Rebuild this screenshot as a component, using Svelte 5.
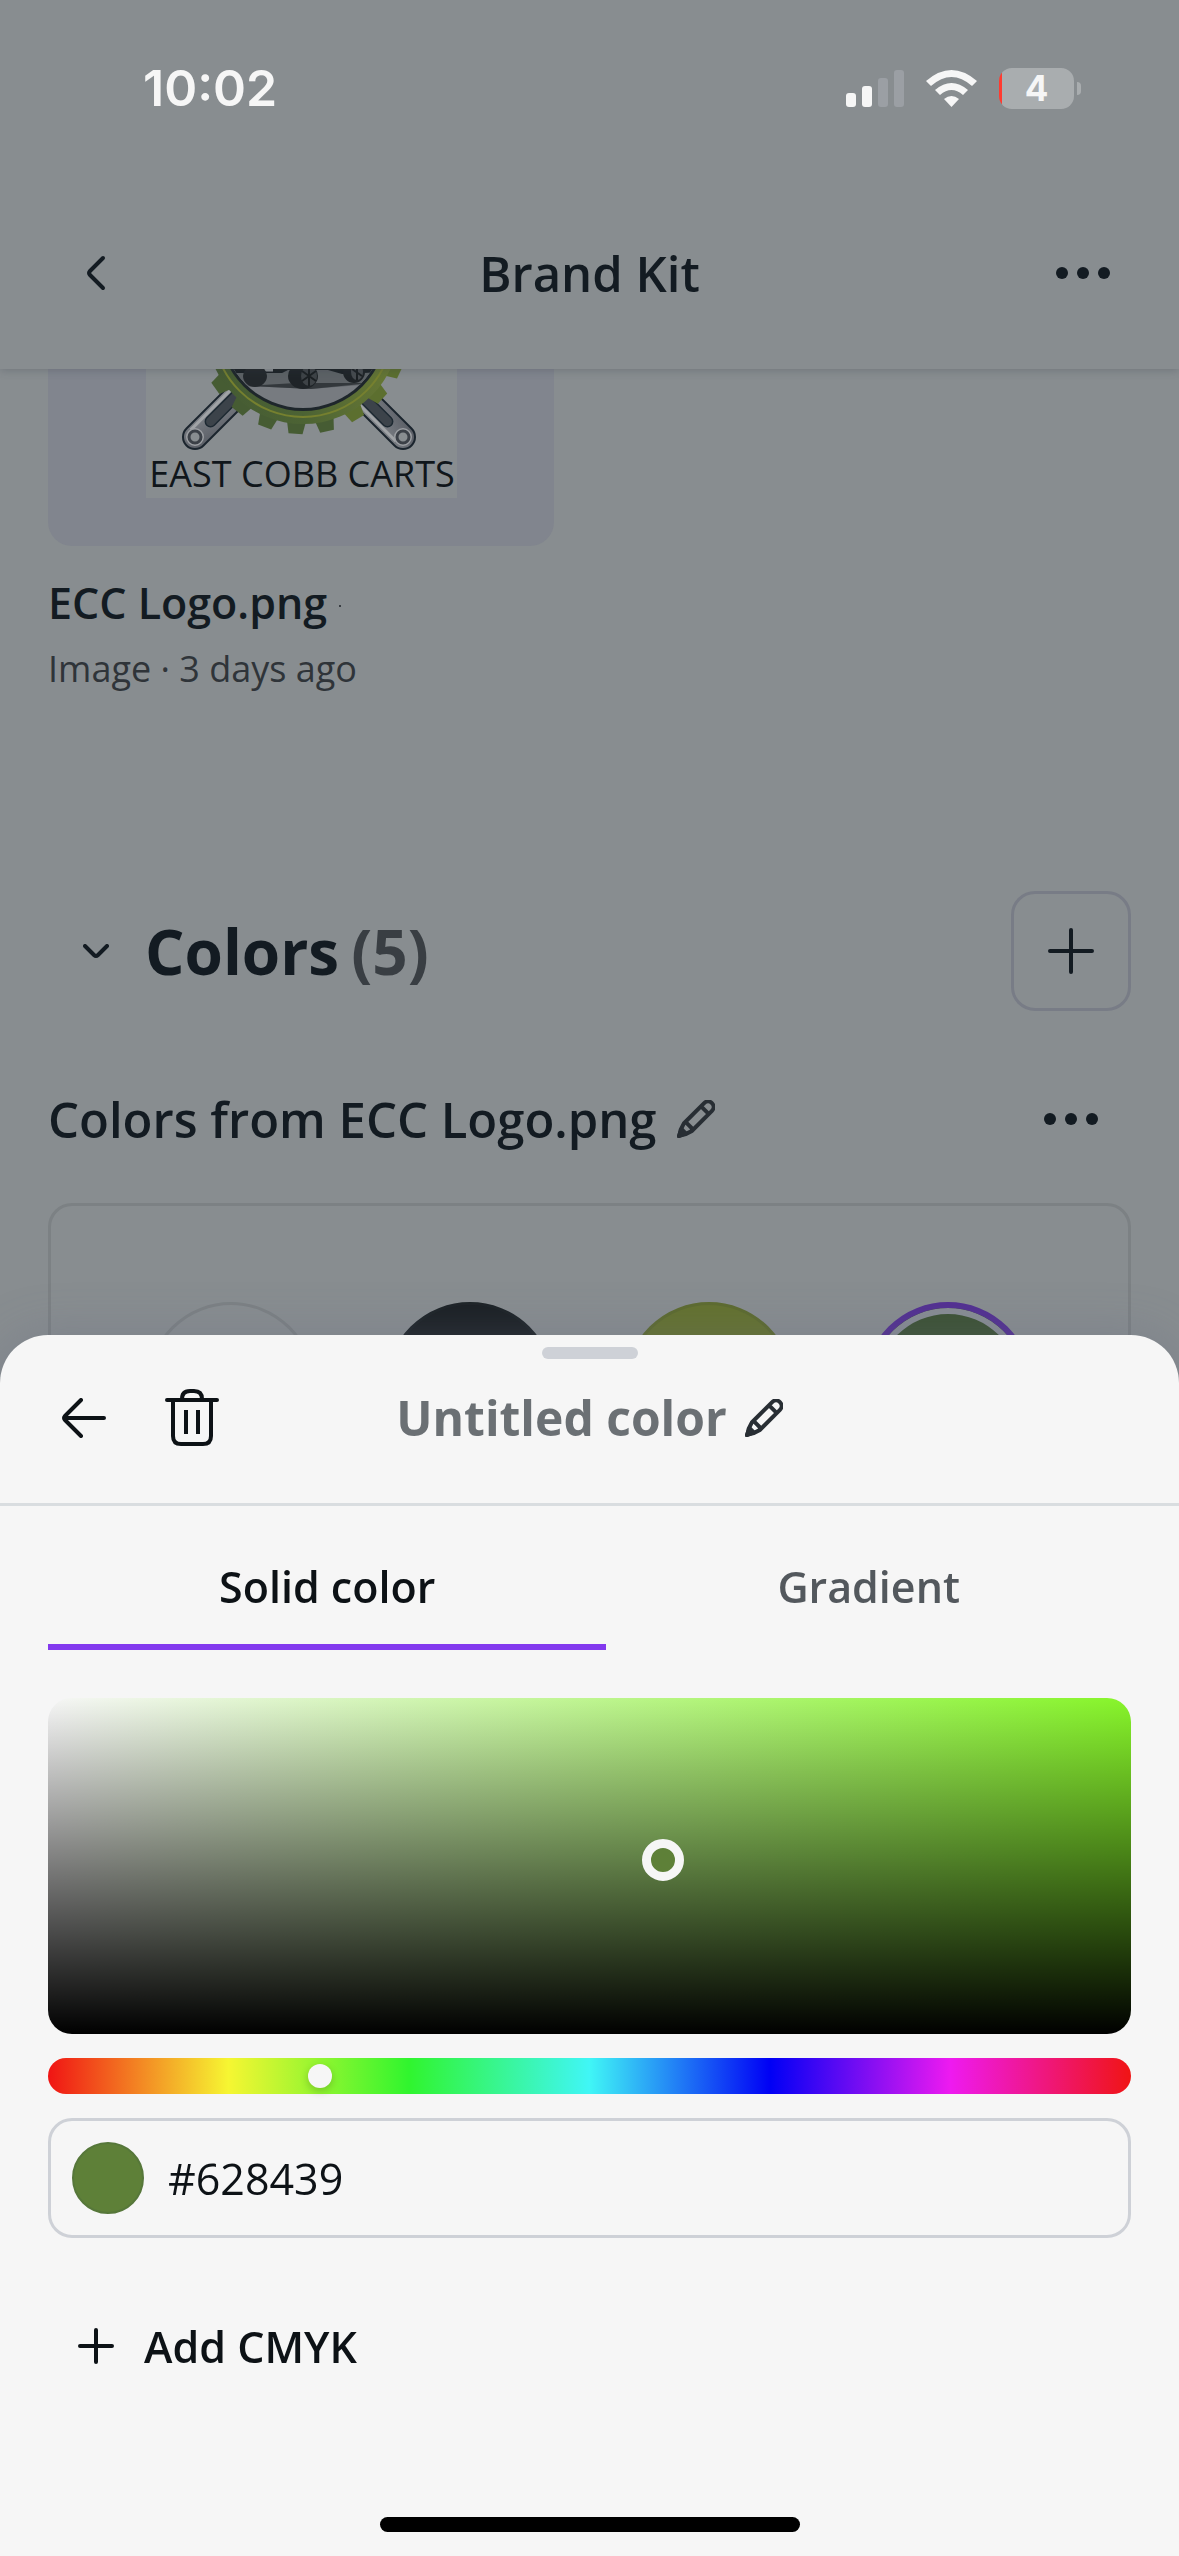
<script>
  let hue = $state(87.5);
  let hex = $state('#628439');
  const saturation = 0.568;
  const value = 0.518;
  const teeth = [8, 25, 42, 59, 77, 94, 111, 128, 145, 162];
  const swatches = [
    { name: 'White', tone: 'white' },
    { name: 'Black', tone: 'black' },
    { name: 'Lime', tone: 'lime' },
    { name: 'Green', tone: 'green' }
  ];
</script>

{#snippet dots()}
  <svg class="dots" viewBox="0 0 54 12" aria-hidden="true">
    <circle cx="6" cy="6" r="6" /><circle cx="27" cy="6" r="6" /><circle cx="48" cy="6" r="6" />
  </svg>
{/snippet}

{#snippet pencil()}
  <svg class="pencil" viewBox="0 0 38 38" aria-hidden="true">
    <g transform="translate(1 37) rotate(-45)">
      <path d="M2 0 Q7 -4 14 -5.5 H42.5 A5.5 5.5 0 0 1 42.5 5.5 H14 Q7 4 2 0 Z M16 -5 V5 M38 -5 V5" />
      <path class="tip" d="M1 0 L8 -3 V3 Z" />
    </g>
  </svg>
{/snippet}

<div class="screen">
  <header class="top">
    <div class="status">
      <time>10:02</time>
      <div class="indicators">
        <svg class="signal" viewBox="0 0 58 37" aria-hidden="true">
          <rect x="0" y="23" width="10" height="14" rx="3" />
          <rect x="16" y="16" width="10" height="21" rx="3" />
          <rect class="off" x="32" y="8" width="10" height="29" rx="3" />
          <rect class="off" x="48" y="0" width="10" height="37" rx="3" />
        </svg>
        <svg class="wifi" viewBox="0 0 51 37" aria-hidden="true">
          <path d="M0 11 Q25.5 -11 51 11 L46 16 Q25.5 -2 5 16 Z" />
          <path d="M9 20 Q25.5 6 42 20 L37 25 Q25.5 15 14 25 Z" />
          <path d="M18 29 Q25.5 23 33 29 L25.5 37 Z" />
        </svg>
        <div class="battery"><span class="cell">4</span><span class="nub"></span></div>
      </div>
    </div>
    <nav class="bar">
      <button class="icon-button start" aria-label="Back">
        <svg class="back" viewBox="0 0 20 36" aria-hidden="true"><path d="M17 3 L4 16 Q2 18 4 20 L17 33" /></svg>
      </button>
      <h1>Brand Kit</h1>
      <button class="icon-button end" aria-label="More options">{@render dots()}</button>
    </nav>
  </header>

  <main>
    <figure>
      <div class="tile">
        <svg class="logo" viewBox="0 0 311 129" role="img" aria-label="East Cobb Carts logo">
          <defs>
            <linearGradient id="gear" x1="0" y1="0" x2="1" y2="0">
              <stop offset="0" stop-color="#445a33" /><stop offset="0.5" stop-color="#4c6334" /><stop offset="1" stop-color="#6a7a34" />
            </linearGradient>
            <linearGradient id="steel" x1="0" y1="0" x2="1" y2="1">
              <stop offset="0" stop-color="#8c9095" /><stop offset="1" stop-color="#565a62" />
            </linearGradient>
            <clipPath id="disc"><circle cx="157" cy="-42" r="81" /></clipPath>
          </defs>
          <rect width="311" height="129" fill="#888d90" />
          {#each [{ x: 49, turn: -45 }, { x: 257, turn: 45 }] as arm}
            <g transform="translate({arm.x} 68) rotate({-arm.turn})">
              <path d="M-12 -66 V0 A12 12 0 0 0 12 0 V-66 Z" fill="url(#steel)" stroke="#1b252e" stroke-width="2" />
              <path d="M-8 -66 V-2" stroke="#a0a3a6" stroke-width="3" />
              <path d="M0 -60 V-22" stroke="#1d2932" stroke-width="12" stroke-linecap="round" />
              <path d="M0 -60 V-22" stroke="#3c434a" stroke-width="9" stroke-linecap="round" />
              <circle r="8" fill="#888d90" stroke="#9b9ea2" stroke-width="2" />
              <circle r="6" fill="#888d90" stroke="#3b4047" stroke-width="3" />
            </g>
          {/each}
          <g transform="translate(157 -42)">
            {#each teeth as angle}
              <path transform="rotate({angle})" d="M92 -10 L107 -7 V7 L92 10 Z" fill={angle < 70 ? '#5c6f2f' : '#465c33'} />
            {/each}
          </g>
          <circle cx="157" cy="-42" r="97" fill="url(#gear)" />
          <circle cx="157" cy="-42" r="90" fill="none" stroke="#76802f" stroke-width="2" />
          <circle cx="157" cy="-42" r="84" fill="#1e262b" />
          <g clip-path="url(#disc)">
            <rect x="70" y="-10" width="180" height="60" fill="#777b80" />
            <path d="M70 -10 H250 V13 L165 20 L100 17 L70 17 Z" fill="#5d6266" />
            <path d="M100 17 L150 14 L225 14 L165 20 Z" fill="#33383c" />
            <path d="M80 -10 H240 V3 L196 5 L182 1 H142 L136 4 H112 L90 4 Z" fill="#1c2226" />
            <path d="M109 1 H127" stroke="#8b8f93" stroke-width="3" />
            <ellipse cx="109" cy="7" rx="12" ry="11" fill="#23282c" />
            <ellipse cx="157" cy="7" rx="15" ry="13" fill="#1f2428" />
            <ellipse cx="163" cy="7" rx="8" ry="10" fill="#3e4347" />
            <path d="M163 -3 V17 M156 2 L170 12 M156 12 L170 2" stroke="#1b2023" stroke-width="2" />
            <ellipse cx="208" cy="3" rx="11" ry="11" fill="#1f2428" />
            <ellipse cx="211" cy="3" rx="6" ry="8" fill="#464b4f" />
            <path d="M211 -5 V11 M206 0 L216 7" stroke="#1b2023" stroke-width="2" />
          </g>
          <text x="156" y="118" text-anchor="middle">EAST COBB CARTS</text>
        </svg>
      </div>
      <figcaption>
        <strong>ECC Logo.png<i class="speck"></i></strong>
        <span>Image · 3 days ago</span>
      </figcaption>
    </figure>

    <section>
      <div class="section-head">
        <button class="toggle" aria-label="Collapse colors">
          <svg viewBox="0 0 26 15" aria-hidden="true"><path d="M2 2 L11 11 Q13 13 15 11 L24 2" /></svg>
        </button>
        <h2>Colors<span>(5)</span></h2>
        <button class="add" aria-label="Add color">
          <svg viewBox="0 0 46 46" aria-hidden="true"><path d="M23 2 V44 M2 23 H44" /></svg>
        </button>
      </div>
      <div class="palette-head">
        <h3>Colors from ECC Logo.png</h3>
        <button class="plain" aria-label="Rename palette">{@render pencil()}</button>
        <button class="icon-button end" aria-label="Palette options">{@render dots()}</button>
      </div>
      <div class="palette">
        {#each swatches as swatch}
          <button class="swatch {swatch.tone}" aria-label={swatch.name}></button>
        {/each}
      </div>
    </section>
  </main>

  <section class="sheet" aria-label="Edit color">
    <div class="handle"></div>
    <div class="sheet-head">
      <div class="actions">
        <button class="plain" aria-label="Go back">
          <svg class="arrow" viewBox="0 0 44 40" aria-hidden="true"><path d="M19 2 L3 18 Q1 20 3 22 L19 38 M3 20 H42" /></svg>
        </button>
        <button class="plain" aria-label="Delete color">
          <svg class="trash" viewBox="0 0 54 58" aria-hidden="true">
            <path d="M2 11 H52 M17 11 V10 Q17 2 25 2 H29 Q37 2 37 10 V11 M8 11 V47 Q8 55 16 55 H38 Q46 55 46 47 V11" />
            <path class="slots" d="M21 21 V45 M33 21 V45" />
          </svg>
        </button>
      </div>
      <div class="name">
        <h2>Untitled color</h2>
        <button class="plain" aria-label="Rename color">{@render pencil()}</button>
      </div>
    </div>

    <div class="editor">
      <div class="tabs" role="tablist">
        <button role="tab" aria-selected="true">Solid color</button>
        <button role="tab" aria-selected="false">Gradient</button>
      </div>
      <div class="field">
        <button
          class="pointer"
          aria-label="Saturation and brightness"
          style="left: {saturation * 100}%; top: {(1 - value) * 100}%"
        ></button>
      </div>
      <input class="hue" type="range" min="0" max="360" step="0.5" aria-label="Hue" bind:value={hue} />
      <label class="hex">
        <span class="chip"></span>
        <input type="text" aria-label="Hex code" bind:value={hex} />
      </label>
      <button class="cmyk">
        <svg viewBox="0 0 36 36" aria-hidden="true"><path d="M18 2 V34 M2 18 H34" /></svg>
        Add CMYK
      </button>
    </div>
    <div class="home"></div>
  </section>
</div>

<style>
  :global(body) {
    background: #888d90;
  }
  .screen {
    --ink: #131b22;
    min-height: 100vh;
    background: #888d90;
    color: var(--ink);
    font-family: 'Open Sans', 'Noto Sans', sans-serif;
    font-size: 43px;
    overflow: hidden;
  }
  .screen * {
    box-sizing: border-box;
  }
  h1, h2, h3, figure {
    margin: 0;
  }
  button {
    border: 0;
    padding: 0;
    background: none;
    color: inherit;
    font: inherit;
  }
  svg {
    display: block;
    fill: none;
    stroke: currentColor;
    stroke-width: 4;
    stroke-linecap: round;
    stroke-linejoin: round;
  }

  /* Status bar and navigation */
  .top {
    position: relative;
    height: 369px;
    background: #888d90;
    box-shadow: 0 2px 8px rgba(50, 60, 70, 0.25);
  }
  .status {
    display: flex;
    justify-content: space-between;
    align-items: center;
    height: 176px;
    padding: 0 98px 0 143px;
    color: #f6f6f6;
    font-family: Inter, sans-serif;
    font-weight: 600;
  }
  time {
    font-size: 50px;
  }
  .indicators {
    display: flex;
    align-items: center;
    gap: 22px;
  }
  .indicators svg {
    height: 37px;
    fill: #f6f6f6;
    stroke: none;
  }
  .signal { width: 58px; }
  .wifi { width: 51px; }
  .indicators .off { fill: #9b9fa4; }
  .battery {
    display: flex;
    align-items: center;
    gap: 3px;
  }
  .cell {
    width: 75px;
    height: 41px;
    border-radius: 13px;
    background: linear-gradient(90deg, #ff3b30 3px, #a9adaf 3px);
    font-size: 35px;
    font-weight: 700;
    line-height: 41px;
    text-align: center;
  }
  .nub {
    width: 4px;
    height: 13px;
    border-radius: 0 4px 4px 0;
    background: #a9adaf;
  }
  .bar {
    display: grid;
    grid-template-columns: 1fr auto 1fr;
    align-items: center;
    height: 193px;
    padding: 0 69px;
  }
  h1 {
    font-size: 49px;
    line-height: 72px;
    font-weight: 600;
  }
  .icon-button {
    display: grid;
    align-items: center;
    height: 72px;
  }
  .start { justify-self: start; padding: 0 17px; }
  .end { justify-self: end; }
  .back { width: 20px; height: 36px; }
  .dots {
    width: 54px;
    height: 12px;
    fill: currentColor;
    stroke: none;
  }

  /* Logo file */
  main {
    padding: 0 48px;
  }
  .tile {
    display: flex;
    justify-content: center;
    width: 506px;
    height: 177px;
    border-radius: 0 0 24px 24px;
    background: #81858e;
  }
  .logo {
    width: 311px;
    height: 129px;
    stroke: none;
    stroke-linecap: butt;
  }
  .logo text {
    fill: #10161b;
    font-size: 36px;
  }
  figcaption {
    display: flex;
    flex-direction: column;
    padding-top: 24px;
  }
  figcaption strong {
    line-height: 66px;
    font-weight: 600;
  }
  .speck {
    display: inline-block;
    width: 2px;
    height: 2px;
    margin: 0 0 12px 12px;
    background: #393e43;
  }
  figcaption span {
    color: #2f3439;
    font-size: 36px;
    line-height: 66px;
  }

  /* Colors section */
  .section-head {
    display: flex;
    align-items: center;
    gap: 36px;
    padding: 189px 0 0 35px;
  }
  .toggle svg { width: 26px; height: 15px; }
  h2 {
    flex: 1;
    font-size: 62px;
    line-height: 90px;
    font-weight: 700;
  }
  h2 span {
    margin-left: 12px;
    color: #393e43;
  }
  .add {
    display: grid;
    place-items: center;
    width: 120px;
    height: 120px;
    border: 3px solid #787c86;
    border-radius: 24px;
  }
  .add svg { width: 46px; height: 46px; }
  .palette-head {
    display: flex;
    align-items: center;
    gap: 20px;
    height: 96px;
    margin: 60px 0 36px;
    padding-right: 33px;
  }
  h3 {
    font-size: 49px;
    line-height: 72px;
    font-weight: 600;
  }
  .palette-head .end { margin-left: auto; }
  .pencil {
    width: 38px;
    height: 38px;
    color: #282e34;
  }
  .tip { fill: currentColor; }
  .palette {
    display: grid;
    grid-template-columns: repeat(4, 1fr);
    justify-items: center;
    padding: 96px 60px;
    border: 3px solid #7c8184;
    border-radius: 24px;
  }
  .swatch {
    width: 168px;
    height: 168px;
    border: 3px solid #7c8184;
    border-radius: 50%;
  }
  .black { background: #1b2024; border-color: #1d2327; }
  .lime { background: #64722f; border-color: #5d6b2f; }
  .green {
    border: 6px solid #533092;
    background: #3c5234;
    box-shadow: inset 0 0 0 6px #888d94;
  }

  /* Color sheet */
  .sheet {
    position: fixed;
    right: 0;
    bottom: 0;
    left: 0;
    padding: 12px 0 24px;
    border-radius: 48px 48px 0 0;
    background: #f6f6f6;
    box-shadow: 0 0 48px rgba(100, 105, 130, 0.35);
    color: #0d1216;
  }
  .handle {
    width: 96px;
    height: 12px;
    margin: 0 auto;
    border-radius: 6px;
    background: #ced1d7;
  }
  .sheet-head {
    display: grid;
    grid-template-columns: 1fr auto 1fr;
    align-items: center;
    height: 147px;
    padding: 0 62px 27px;
    border-bottom: 3px solid #d9dde0;
  }
  .actions {
    display: flex;
    align-items: center;
    gap: 59px;
  }
  .name {
    display: flex;
    align-items: center;
    gap: 18px;
  }
  .arrow { width: 44px; height: 40px; }
  .trash { width: 54px; height: 58px; }
  .slots { stroke-linecap: butt; }
  .name h2 {
    color: #6b7074;
    font-size: 48px;
    line-height: 72px;
  }
  .editor {
    display: flex;
    flex-direction: column;
    gap: 24px;
    padding: 36px 48px 0;
  }
  .tabs {
    display: flex;
    margin-bottom: 24px;
  }
  .tabs button {
    flex: auto;
    height: 108px;
    padding-bottom: 12px;
    border-bottom: 6px solid transparent;
    color: #53585d;
    font-weight: 600;
    line-height: 60px;
  }
  .tabs button[aria-selected='true'] {
    border-color: #8339ee;
    color: #0d1216;
  }
  .field {
    position: relative;
    height: 336px;
    border-radius: 24px;
    background: linear-gradient(transparent, #000), linear-gradient(90deg, #f6f6f6, #87f52a);
  }
  .pointer {
    position: absolute;
    width: 42px;
    height: 42px;
    border: 9px solid #f6f6f6;
    border-radius: 50%;
    background: #5e8038;
    transform: translate(-50%, -50%);
  }
  .hue {
    appearance: none;
    width: 100%;
    height: 36px;
    margin: 0;
    padding: 0 6px;
    border-radius: 18px;
    background: linear-gradient(90deg, #f01414, #f6f632, #30f52e, #40f6f6, #0000f5, #ee1af0, #f01414);
  }
  .hue::-webkit-slider-thumb {
    appearance: none;
    width: 24px;
    height: 24px;
    border-radius: 50%;
    background: #f6f6f6;
    box-shadow: 0 3px 9px rgba(0, 0, 0, 0.2);
  }
  .hex {
    display: flex;
    align-items: center;
    gap: 24px;
    height: 120px;
    padding: 0 21px;
    border: 3px solid #ced1d7;
    border-radius: 24px;
  }
  .chip {
    width: 72px;
    height: 72px;
    border: 2px solid #56773a;
    border-radius: 50%;
    background: #5e8038;
  }
  .hex input {
    flex: 1;
    min-width: 0;
    border: 0;
    padding: 0;
    background: none;
    color: inherit;
    font: inherit;
    outline: 0;
  }
  .cmyk {
    display: flex;
    align-items: center;
    align-self: flex-start;
    gap: 30px;
    height: 120px;
    margin-top: 24px;
    padding: 0 30px;
    font-weight: 600;
  }
  .cmyk svg { width: 36px; height: 36px; }
  .home {
    width: 420px;
    height: 15px;
    margin: 111px auto 0;
    border-radius: 8px;
    background: #000;
  }
</style>
